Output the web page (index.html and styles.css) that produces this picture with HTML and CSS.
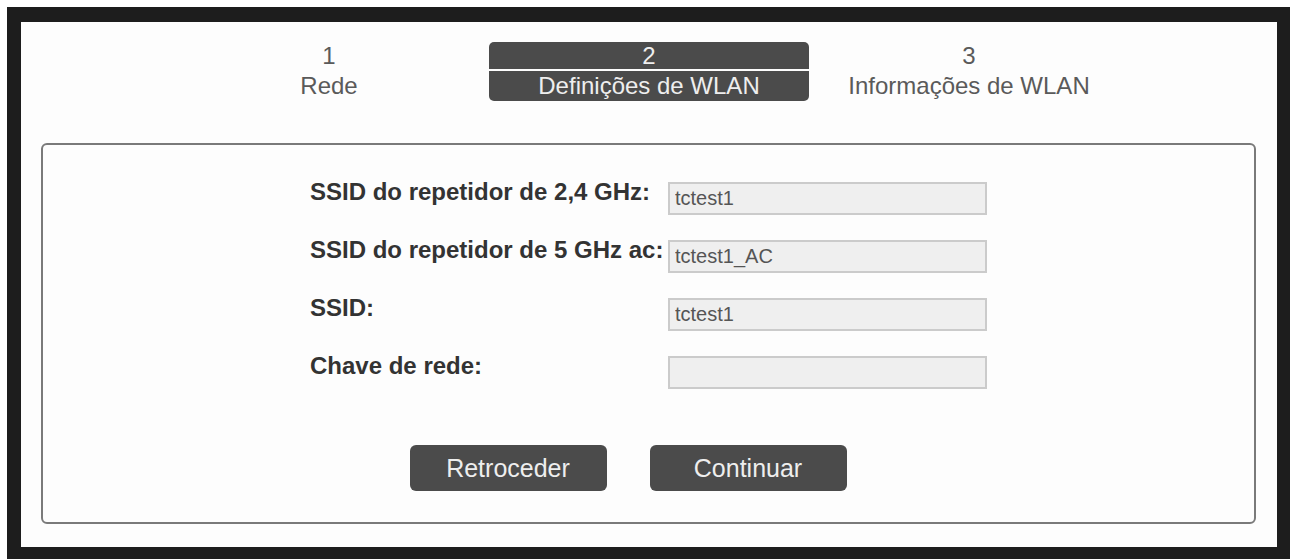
FILE: index.html
```html
<!DOCTYPE html>
<html>

<head>
	<meta charset='utf-8'>
	<title>Definições de WLAN</title>
	<link rel="stylesheet" href="styles.css">
</head>

<body>
	<div class="frame">
		<ol class="steps">
			<li class="step">
				<span class="step_num">1</span>
				<span class="step_name">Rede</span>
			</li>
			<li class="step step_active">
				<span class="step_num">2</span>
				<span class="step_name">Definições de WLAN</span>
			</li>
			<li class="step">
				<span class="step_num">3</span>
				<span class="step_name">Informações de WLAN</span>
			</li>
		</ol>

		<form class="panel" onsubmit="return false">
			<div class="fields">
				<label for="ssid24">SSID do repetidor de 2,4 GHz:</label> <input type="text" id="ssid24" value="tctest1">
				<label for="ssid5" >SSID do repetidor de 5 GHz ac:</label> <input type="text" id="ssid5"  value="tctest1_AC">
				<label for="ssid"  >SSID:</label>                          <input type="text" id="ssid"   value="tctest1">
				<label for="key"   >Chave de rede:</label>                 <input type="password" id="key" value="">
			</div>
			<div class="buttons">
				<button type="button">Retroceder</button>
				<button type="submit">Continuar</button>
			</div>
		</form>
	</div>
</body>

</html>
```

FILE: styles.css
```css
body {
	margin: 0;
	background: white;
	font-family: "Liberation Sans", Arial, sans-serif;
}
.frame {
	margin: 7px 0 0 7px;
	width: 1256px;
	height: 525px;
	border: solid #1d1d1d;
	border-width: 15px 13px 12px 14px;
	background: #fdfdfd;
}

/* wizard steps */
.steps {
	display: flex;
	justify-content: center;
	list-style: none;
	margin: 0;
	padding: 20px 0 0;
}
.step {
	width: 320px;
	display: flex;
	flex-direction: column;
	align-items: stretch;
	gap: 2px;
	text-align: center;
	font-size: 24px;
	color: #5a5a5a;
}
.step_num {
	line-height: 27px;
}
.step_name {
	line-height: 30px;
}
.step_active {
	color: #eee;
}
.step_active .step_num,
.step_active .step_name {
	background: #4b4b4b;
}
.step_active .step_num {
	border-radius: 5px 5px 0 0;
}
.step_active .step_name {
	border-radius: 0 0 5px 5px;
}

/* form box */
.panel {
	margin: 42px 21px 0 20px;
	height: 381px;
	box-sizing: border-box;
	border: 2px solid #7a7a7a;
	border-radius: 6px;
	padding-top: 37px;
}
.fields {
	display: grid;
	grid-template-columns: 358px 319px;
	justify-content: center;
	row-gap: 25px;
}
.fields label {
	font-weight: bold;
	font-size: 24px;
	line-height: 20px;
	color: #333;
}
.fields input {
	box-sizing: border-box;
	width: 319px;
	height: 33px;
	margin: 0;
	padding: 0 5px;
	border: 2px solid #cbcbcb;
	background: #efefef;
	font: 20px "Liberation Sans", Arial, sans-serif;
	color: #555;
	outline: none;
}
.buttons {
	display: flex;
	justify-content: center;
	gap: 43px;
	margin-top: 56px;
	padding-right: 41px;
}
.buttons button {
	width: 197px;
	height: 46px;
	border: none;
	border-radius: 6px;
	background: #4b4b4b;
	color: #eee;
	font: 25px "Liberation Sans", Arial, sans-serif;
}
```
